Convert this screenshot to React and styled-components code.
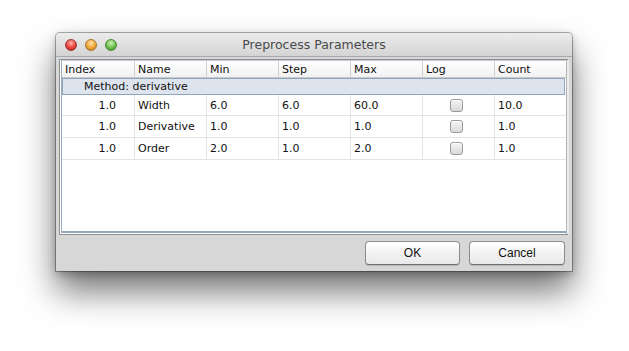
import React from "react";
import styled, { createGlobalStyle } from "styled-components";

const Global = createGlobalStyle`
  html, body { margin: 0; padding: 0; background: #ffffff; }
  body { font-family: "DejaVu Sans", "Liberation Sans", sans-serif; }
`;

const Page = styled.div`
  width: 629px;
  height: 351px;
  padding: 33px 0 0 56px;
  box-sizing: border-box;
`;

const Window = styled.div`
  width: 516px;
  height: 238px;
  background: #d7d7d7;
  border-radius: 4px 4px 0 0;
  box-shadow: 0 0 0 1px rgba(0,0,0,0.3), 0 20px 34px rgba(0,0,0,0.55), 0 3px 8px rgba(0,0,0,0.25);
  display: flex;
  flex-direction: column;
  overflow: hidden;
`;

const TitleBar = styled.div`
  height: 24px;
  flex: none;
  display: flex;
  align-items: center;
  position: relative;
  background: linear-gradient(#ececec, #d4d4d4);
  border-bottom: 1px solid #a9a9a9;
  box-sizing: border-box;
  padding-left: 9px;
  gap: 8px;
`;

const Light = styled.div`
  width: 12px;
  height: 12px;
  border-radius: 50%;
  box-sizing: border-box;
  border: 1px solid ${(p) => p.$edge};
  background: radial-gradient(circle at 50% 30%, ${(p) => p.$hi} 0%, ${(p) => p.$c} 55%, ${(p) => p.$dk} 100%);
`;

const Title = styled.div`
  position: absolute;
  left: 0;
  right: 0;
  top: 0;
  bottom: 0;
  display: flex;
  align-items: center;
  justify-content: center;
  font-size: 12.5px;
  color: #4a4a4a;
  pointer-events: none;
`;

const Body = styled.div`
  flex: 1;
  display: flex;
  flex-direction: column;
  padding: 2px 4px 6px 3px;
`;

const TableFrame = styled.div`
  height: 176px;
  border: 1px solid #8f8f8f;
  background: #ffffff;
  display: flex;
  box-sizing: border-box;
`;

const TableInner = styled.div`
  flex: 1;
  border: 1px solid #99aec3;
  border-top-color: #c0cbd6;
  border-right: none;
  display: flex;
  flex-direction: column;
  margin: 0 0 1px 1px;
  border-bottom: 2px solid #91a7bd;
`;

const ScrollEdge = styled.div`
  width: 2px;
  flex: none;
  border-left: 1px solid #b5b5b5;
  background: #ececec;
`;

const Row = styled.div`
  display: grid;
  grid-template-columns: repeat(7, 72px);
  height: ${(p) => p.$h}px;
  box-sizing: border-box;
  border-bottom: 1px solid #e3e3e3;
`;

const HeaderRow = styled(Row)`
  background: linear-gradient(#ffffff, #f1f1f1);
  border-bottom: 1px solid #c9c9c9;
`;

const HeadCell = styled.div`
  font-size: 11px;
  color: #111;
  padding-left: 3px;
  display: flex;
  align-items: center;
  border-left: ${(p) => (p.$first ? "none" : "1px solid #d2d2d2")};
`;

const MethodRow = styled.div`
  height: 17px;
  box-sizing: border-box;
  background: #dde4ee;
  border: 1px solid #8ea4bb;
  margin-right: 1px;
  font-size: 11px;
  color: #111;
  display: flex;
  align-items: center;
  padding-left: 21px;
`;

const Cell = styled.div`
  font-size: 11px;
  color: #111;
  display: flex;
  align-items: center;
  justify-content: ${(p) => (p.$align === "right" ? "flex-end" : p.$align === "center" ? "center" : "flex-start")};
  padding: ${(p) => (p.$align === "right" ? "0 18px 0 0" : p.$align === "center" ? "0 4px 0 0" : "0 0 0 3px")};
  border-left: ${(p) => (p.$first ? "none" : "1px solid #e3e3e3")};
`;

const Check = styled.div`
  width: 13px;
  height: 13px;
  box-sizing: border-box;
  border-radius: 3px;
  border: 1px solid #9a9a9a;
  background: linear-gradient(#f4f4f4, #d9d9d9);
  box-shadow: inset 0 1px 0 #ffffff;
`;

const Footer = styled.div`
  display: flex;
  justify-content: flex-end;
  gap: 9px;
  padding-top: 6px;
  padding-right: 3px;
`;

const Button = styled.button`
  width: ${(p) => p.$w}px;
  height: 24px;
  border: 1px solid #8d8d8d;
  border-bottom-color: #6f6f6f;
  border-radius: 4px;
  background: linear-gradient(#ffffff, #f2f2f2 50%, #e9e9e9);
  box-shadow: 0 1px 1px rgba(0,0,0,0.15);
  font-family: "Liberation Sans", Arial, sans-serif;
  font-size: 12px;
  color: #111;
  padding: 0;
`;

const headers = ["Index", "Name", "Min", "Step", "Max", "Log", "Count"];
const rows = [
  ["1.0", "Width", "6.0", "6.0", "60.0", "10.0"],
  ["1.0", "Derivative", "1.0", "1.0", "1.0", "1.0"],
  ["1.0", "Order", "2.0", "1.0", "2.0", "1.0"],
];

export default function App() {
  return (
    <Page>
      <Global />
      <Window>
        <TitleBar>
          <Light $c="#e8403a" $hi="#ffb3a8" $dk="#a8241e" $edge="#9a3a34" />
          <Light $c="#f2a73b" $hi="#ffe2a6" $dk="#b56e12" $edge="#a87526" />
          <Light $c="#6bbf4b" $hi="#cdf2b8" $dk="#3b8a23" $edge="#4d8a37" />
          <Title>Preprocess Parameters</Title>
        </TitleBar>
        <Body>
          <TableFrame>
            <TableInner>
              <HeaderRow $h={17}>
                {headers.map((h, i) => (
                  <HeadCell key={h} $first={i === 0}>{h}</HeadCell>
                ))}
              </HeaderRow>
              <MethodRow>Method: derivative</MethodRow>
              {rows.map((r, i) => (
                <Row key={i} $h={i === 0 ? 21 : 22}>
                  <Cell $first $align="right">{r[0]}</Cell>
                  <Cell>{r[1]}</Cell>
                  <Cell>{r[2]}</Cell>
                  <Cell>{r[3]}</Cell>
                  <Cell>{r[4]}</Cell>
                  <Cell $align="center"><Check /></Cell>
                  <Cell>{r[5]}</Cell>
                </Row>
              ))}
            </TableInner>
            <ScrollEdge />
          </TableFrame>
          <Footer>
            <Button $w={95}>OK</Button>
            <Button $w={96}>Cancel</Button>
          </Footer>
        </Body>
      </Window>
    </Page>
  );
}
